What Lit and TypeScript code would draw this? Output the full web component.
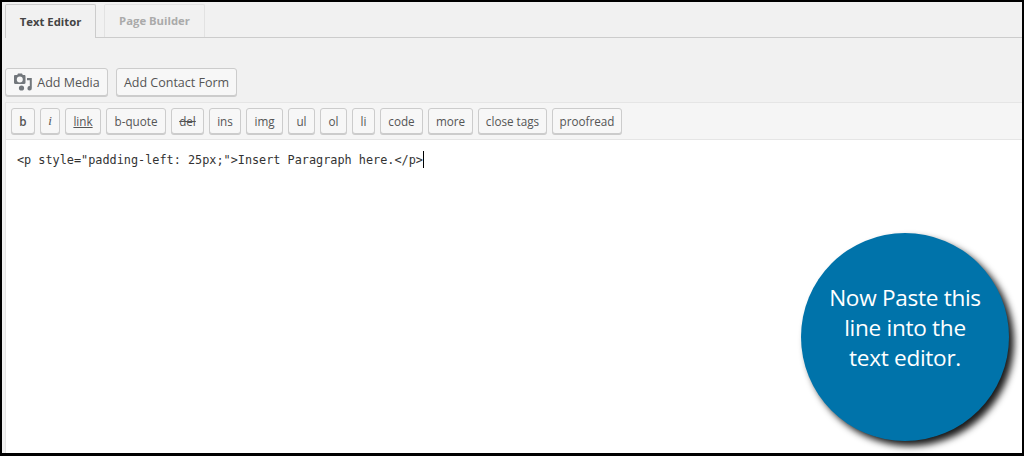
import { LitElement, html, css } from "lit";
import { customElement } from "lit/decorators.js";

const QT: [string, number, string?][] = [
  ["b", 24, "bold"], ["i", 20, "ital"], ["link", 36, "link"], ["b-quote", 60], ["del", 33, "del"],
  ["ins", 32], ["img", 37], ["ul", 27], ["ol", 27], ["li", 23], ["code", 43], ["more", 45],
  ["close tags", 69], ["proofread", 70],
];

@customElement("app-root")
export class AppRoot extends LitElement {
  static styles = css`
    :host {
      display: block; position: relative; width: 1024px; height: 456px; box-sizing: border-box;
      border: 2px solid #000; border-bottom-width: 3px; background: #f1f1f1; overflow: hidden;
      font-family: "Open Sans", sans-serif; color: #555;
    }
    .page { display: flex; flex-direction: column; height: 100%; padding-left: 3px; box-sizing: border-box; }
    .tabs { display: flex; gap: 8px; height: 33px; margin-top: 2px; margin-right: -3px; border-bottom: 1px solid #ccc; padding-right: 3px; }
    .tab {
      box-sizing: border-box; height: 34px; border: 1px solid #ddd; border-bottom: 0; display: flex;
      align-items: center; justify-content: center; font-size: 11.3px; font-weight: 700; background: #f1f1f1;
      color: #aaa; border-radius: 2px 2px 0 0; padding-bottom: 1px;
    }
    .tab.on { width: 91px; color: #444; border-color: #ccc; }
    .tab.off { width: 101px; height: 33px; border-color: #e2e2e2; }
    .media { display: flex; gap: 8px; margin-top: 30px; height: 28px; }
    .btn {
      box-sizing: border-box; height: 28px; border: 1px solid #ccc; border-radius: 3px; background: #f7f7f7;
      box-shadow: 0 1px 0 #ccc; font-size: 12.5px; color: #555; display: flex; align-items: center; justify-content: center; gap: 4px;
    }
    .btn.m1 { width: 103px; }
    .btn.m2 { width: 121px; }
    .btn svg { width: 20px; height: 20px; flex: none; }
    .editor { flex: 1; margin-top: 6px; display: flex; flex-direction: column; }
    .qt {
      box-sizing: border-box; height: 38px; background: #f5f5f5; border: 1px solid #e5e5e5; border-right: 0;
      display: flex; gap: 5px; padding: 5px 0 0 5px; align-items: flex-start;
    }
    .q {
      box-sizing: border-box; height: 26px; border: 1px solid #ccc; border-radius: 3px; background: #f7f7f7;
      box-shadow: 0 1px 0 #ccc; font-size: 11.7px; color: #555; display: flex; align-items: center; justify-content: center; padding-bottom: 1px;
    }
    .q.bold { font-weight: 600; }
    .q.ital { font-style: italic; font-family: "Liberation Serif", serif; font-size: 13px; }
    .q.link { text-decoration: underline; }
    .q.del { text-decoration: line-through; }
    .text {
      flex: 1; background: #fff; border-left: 1px solid #e5e5e5; padding: 11px 0 0 11px;
      font: 11.84px/18px "DejaVu Sans Mono", monospace; color: #333; white-space: pre;
    }
    .caret { display: inline-block; width: 1px; height: 17px; background: #000; vertical-align: -4px; }
    .circle {
      position: absolute; left: 799px; top: 231px; width: 208px; height: 208px; border-radius: 50%;
      background: #0073aa; box-shadow: 5px 5px 7px rgba(0,0,0,.9); color: #fff; text-align: center;
      font-family: "Open Sans", sans-serif; font-size: 22.6px; line-height: 30px; box-sizing: border-box; padding-top: 50px;
      letter-spacing: -0.3px;
    }
  `;

  render() {
    return html`
      <div class="page">
        <div class="tabs">
          <div class="tab on">Text Editor</div>
          <div class="tab off">Page Builder</div>
        </div>
        <div class="media">
          <div class="btn m1">
            <svg viewBox="0 0 20 20" fill="#72777c">
              <path fill-rule="evenodd" d="M1 4.200C1 3.500 1.500 3 2.200 3H4.200L5 1.500h4L9.800 3h1.500c.7 0 1.200.5 1.200 1.200V10.800c0 .7-.5 1.200-1.200 1.200H2.200C1.500 12 1 11.500 1 10.800V4.200zM6.800 4.500a3 3 0 1 0 0 6 3 3 0 0 0 0-6z"/>
              <path d="M14 6h4.800v10.300a2.200 2.200 0 1 1-2-2.200V8.300H14V6z"/>
              <circle cx="8.500" cy="16" r="2.600"/>
            </svg>
            Add Media
          </div>
          <div class="btn m2">Add Contact Form</div>
        </div>
        <div class="editor">
          <div class="qt">
            ${QT.map(([t, w, c]) => html`<div class="q ${c ?? ""}" style="width:${w}px">${t}</div>`)}
          </div>
          <div class="text">&lt;p style="padding-left: 25px;"&gt;Insert Paragraph here.&lt;/p&gt;<span class="caret"></span></div>
        </div>
      </div>
      <div class="circle">Now Paste this<br />line into the<br />text editor.</div>
    `;
  }
}
